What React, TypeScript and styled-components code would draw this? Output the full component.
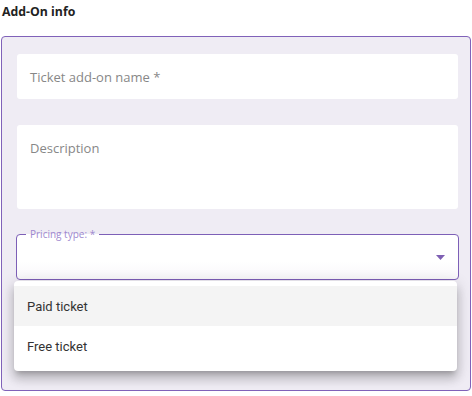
import React from "react";
import styled, { createGlobalStyle } from "styled-components";

const Global = createGlobalStyle`
  html, body { margin: 0; padding: 0; background: #ffffff; }
  body { font-family: "Open Sans", "Liberation Sans", sans-serif; }
`;

const Page = styled.div`
  width: 472px;
  height: 396px;
  box-sizing: border-box;
  padding: 4px 0 0 1px;
`;

const Title = styled.div`
  font-family: "Open Sans", sans-serif;
  font-weight: 700;
  font-size: 12.3px;
  line-height: 16px;
  color: #222;
  padding-left: 1px;
  height: 32px;
`;

const Card = styled.div`
  position: relative;
  width: 470px;
  height: 355px;
  box-sizing: border-box;
  border: 1.5px solid #8062b9;
  border-radius: 4px;
  background: #efecf4;
  padding: 17px 12px 0 14px;
  display: flex;
  flex-direction: column;
`;

const Field = styled.div<{ $h: number; $gap: number; $top?: boolean }>`
  height: ${(p) => p.$h}px;
  margin-bottom: ${(p) => p.$gap}px;
  background: #fff;
  border-radius: 3px;
  box-sizing: border-box;
  padding: ${(p) => (p.$top ? "14px 13px" : "0 13px")};
  display: flex;
  align-items: ${(p) => (p.$top ? "flex-start" : "center")};
  font-size: 13px;
  color: #878787;
  margin-left: 1px;
  width: 441px;
`;

const Select = styled.div`
  position: relative;
  height: 46px;
  box-sizing: border-box;
  border: 1px solid #7d5fb7;
  border-radius: 4px;
  background: linear-gradient(#ffffff 60%, #f8f7fa);
  width: 443px;
`;

const Legend = styled.span`
  position: absolute;
  left: 9px;
  top: -8px;
  padding: 0 4px;
  font-size: 10px;
  line-height: 14px;
  color: #9e88cf;
  background: linear-gradient(#efecf4 50%, #ffffff 50%);
`;

const Arrow = styled.svg`
  position: absolute;
  right: 13px;
  top: 20px;
`;

const Menu = styled.div`
  position: absolute;
  left: 12px;
  top: 244px;
  width: 443px;
  padding: 5px 0;
  display: flex;
  flex-direction: column;
  background: #fff;
  border-radius: 4px;
  box-shadow: 0 5px 5px -3px rgba(0, 0, 0, 0.2), 0 8px 10px 1px rgba(0, 0, 0, 0.14),
    0 3px 14px 2px rgba(0, 0, 0, 0.12);
  overflow: hidden;
`;

const Option = styled.div<{ $active?: boolean }>`
  height: 40px;
  display: flex;
  align-items: center;
  padding-left: 13px;
  font-family: Roboto, "Liberation Sans", sans-serif;
  font-size: 13px;
  color: #333;
  background: ${(p) => (p.$active ? "#f4f4f4" : "#fff")};
`;

export default function App() {
  return (
    <Page>
      <Global />
      <Title>Add-On info</Title>
      <Card>
        <Field $h={45} $gap={26}>Ticket add-on name *</Field>
        <Field $h={84} $gap={25} $top>Description</Field>
        <Select>
          <Legend>Pricing type: *</Legend>
          <Arrow width="9" height="5" viewBox="0 0 9 5">
            <path d="M0 0h9L4.5 5z" fill="#7e5fb3" />
          </Arrow>
        </Select>
        <Menu>
          <Option $active>Paid ticket</Option>
          <Option>Free ticket</Option>
        </Menu>
      </Card>
    </Page>
  );
}
